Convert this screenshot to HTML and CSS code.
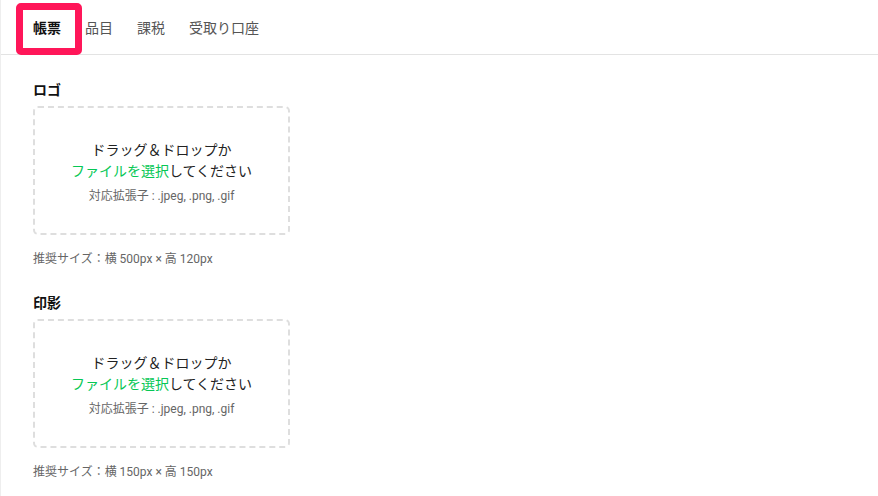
FILE: index.html
```html
<!DOCTYPE html>
<html lang="ja">
  <head>
    <meta charset="UTF-8" />
    <meta name="viewport" content="width=device-width, initial-scale=1.0" />
    <title>帳票設定</title>
    <link rel="stylesheet" href="styles.css">
  </head>
  <body>
    <div class="page">
      <nav class="tabs">
        <a class="tab active" href="#">帳票</a>
        <a class="tab" href="#">品目</a>
        <a class="tab" href="#">課税</a>
        <a class="tab" href="#">受取り口座</a>
      </nav>
      <span class="highlight"></span>

      <main class="content">
        <section class="field">
          <h2 class="field-label">ロゴ</h2>
          <div class="dropzone">
            <p class="drop-text">ドラッグ＆ドロップか</p>
            <p class="drop-text"><span class="pick">ファイルを選択</span>してください</p>
            <p class="drop-note">対応拡張子 : .jpeg, .png, .gif</p>
          </div>
          <p class="hint">推奨サイズ：横 500px × 高 120px</p>
        </section>

        <section class="field">
          <h2 class="field-label">印影</h2>
          <div class="dropzone">
            <p class="drop-text">ドラッグ＆ドロップか</p>
            <p class="drop-text"><span class="pick">ファイルを選択</span>してください</p>
            <p class="drop-note">対応拡張子 : .jpeg, .png, .gif</p>
          </div>
          <p class="hint">推奨サイズ：横 150px × 高 150px</p>
        </section>
      </main>
    </div>
  </body>
</html>
```

FILE: styles.css
```css
body {
  margin: 0;
  font-family: "Roboto", "Noto Sans CJK JP", sans-serif;
  color: #222;
  background: #fff;
}
.page {
  position: relative;
  min-height: 496px;
  border-left: 1px solid #eee;
  box-sizing: border-box;
}
.tabs {
  display: flex;
  height: 54px;
  padding-left: 20px;
  border-bottom: 1px solid #e3e3e3;
}
.tab {
  display: flex;
  align-items: center;
  padding: 0 12px;
  font-size: 14px;
  color: #555;
  text-decoration: none;
}
.tab.active {
  color: #111;
  font-weight: bold;
}
/* annotation box drawn over the active tab */
.highlight {
  position: absolute;
  top: 3px;
  left: 15px;
  width: 66px;
  height: 52px;
  box-sizing: border-box;
  border: 7px solid #ff1659;
  border-radius: 5px;
}
.content {
  padding: 25px 0 0 32px;
}
.field {
  margin-bottom: 26px;
}
.field-label {
  margin: 0 0 6px;
  font-size: 14px;
  line-height: 20px;
  font-weight: bold;
  color: #111;
}
.dropzone {
  width: 257px;
  height: 129px;
  box-sizing: border-box;
  border: 2px dashed #dedede;
  border-radius: 5px;
  display: flex;
  flex-direction: column;
  align-items: center;
  justify-content: center;
  padding-top: 4px;
}
.dropzone p {
  margin: 0;
}
.drop-text {
  font-size: 14px;
  line-height: 21px;
  color: #222;
}
.pick {
  color: #06c755;
}
.dropzone .drop-note {
  margin-top: 5px;
  font-size: 12px;
  line-height: 18px;
  color: #666;
}
.hint {
  margin: 16px 0 0;
  font-size: 12px;
  line-height: 16px;
  color: #666;
}
```
